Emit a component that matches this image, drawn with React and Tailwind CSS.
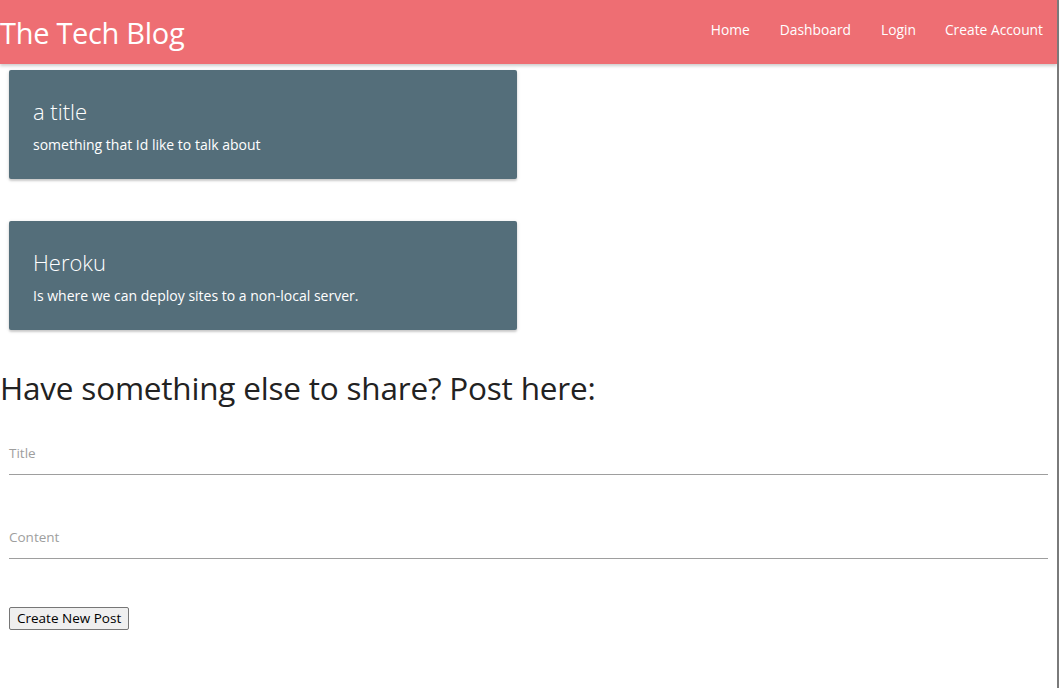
import React from 'react';

const posts = [
    { title: 'a title', body: 'something that Id like to talk about' },
    { title: 'Heroku', body: 'Is where we can deploy sites to a non-local server.' },
];

function App() {
    return (
        <div className="flex min-h-[688px] w-[1060px] bg-white" style={{ fontFamily: '"Open Sans", "Noto Sans", sans-serif' }}>
            <div className="w-[1057px]">
                <nav className="flex h-[64px] items-center justify-between bg-[#ee6e73] text-white shadow-[0_2px_3px_rgba(0,0,0,0.2)]">
                    <a className="text-[29px] leading-none tracking-[-0.3px]">The Tech Blog</a>
                    <ul className="flex pb-[3px] text-[13.8px]">
                        <li className="px-[15px]">Home</li>
                        <li className="px-[15px]">Dashboard</li>
                        <li className="px-[15px]">Login</li>
                        <li className="px-[14px]">Create Account</li>
                    </ul>
                </nav>

                <div className="pl-[9px] pt-[6px]">
                    {posts.map((post) => (
                        <div key={post.title} className="mb-[42px] w-[508px] rounded-[2px] bg-[#546e7a] p-[24px] text-white shadow-[0_2px_2px_rgba(0,0,0,0.14),0_1px_4px_rgba(0,0,0,0.12)]">
                            <span className="block pt-[1px] text-[22px] font-light leading-[32px]">{post.title}</span>
                            <p className="mt-[7px] text-[14px] leading-[21px]">{post.body}</p>
                        </div>
                    ))}
                </div>

                <h4 className="-mt-[9px] text-[31.5px] leading-[50px] text-[#222] tracking-[-0.2px]">Have something else to share? Post here:</h4>

                <form className="px-[9px] pt-[27px]">
                    <div className="border-b border-[#9e9e9e] pb-[10px]">
                        <span className="text-[13.5px] text-[#9e9e9e]">Title</span>
                    </div>
                    <div className="mt-[49px] border-b border-[#9e9e9e] pb-[10px]">
                        <span className="text-[13.5px] text-[#9e9e9e]">Content</span>
                    </div>
                    <button type="button" className="mt-[48px] rounded-[2px] border border-[#767676] bg-[#efefef] px-[7px] py-[1px] text-[13.5px] leading-[19px] text-black">
                        Create New Post
                    </button>
                </form>
            </div>
            <div className="w-[2px] bg-[#7a7a7a]" />
        </div>
    );
}

export default App;
